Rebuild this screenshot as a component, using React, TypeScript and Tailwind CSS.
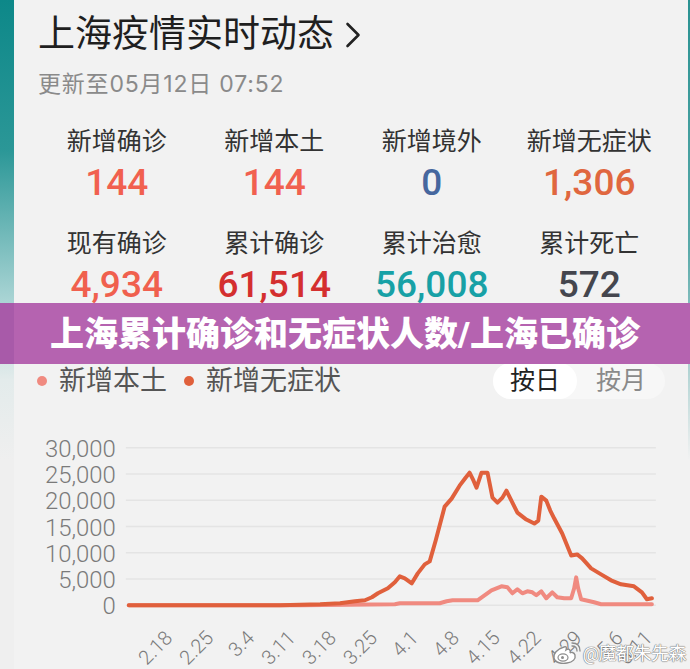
import React from "react";

const stats1 = [
  { label: "新增确诊", value: "144", color: "text-[#f1604f]" },
  { label: "新增本土", value: "144", color: "text-[#f1604f]" },
  { label: "新增境外", value: "0", color: "text-[#46679e]" },
  { label: "新增无症状", value: "1,306", color: "text-[#e0673f]" },
];
const stats2 = [
  { label: "现有确诊", value: "4,934", color: "text-[#f0604e]" },
  { label: "累计确诊", value: "61,514", color: "text-[#d42f2f]" },
  { label: "累计治愈", value: "56,008", color: "text-[#18a1a6]" },
  { label: "累计死亡", value: "572", color: "text-[#45464e]" },
];

const orange: [number, number][] = [
  [128, 605], [200, 605], [280, 605], [320, 604], [340, 603], [355, 601], [365, 600], [372, 597], [378, 593],
  [388, 588], [395, 582], [400, 576], [405, 578], [412, 583], [418, 573], [425, 564], [430, 561], [436, 540],
  [445, 506], [452, 498], [460, 485], [466, 477], [470, 472], [474, 480], [477, 487], [480, 478], [482, 472],
  [488, 472], [490, 482], [493, 497], [498, 502], [503, 497], [507, 490], [512, 500], [518, 512], [527, 519],
  [535, 523], [539, 520], [542, 496], [547, 500], [551, 510], [555, 518], [563, 533], [572, 555], [578, 554],
  [583, 558], [592, 568], [602, 574], [612, 580], [622, 584], [635, 586], [643, 592], [648, 599], [653, 598],
];
const coral: [number, number][] = [
  [128, 605], [300, 605], [395, 604], [400, 603], [440, 603], [447, 601], [453, 600], [478, 600], [485, 595],
  [492, 590], [502, 586], [508, 587], [513, 593], [518, 589], [523, 593], [528, 591], [533, 592], [537, 595],
  [542, 591], [547, 598], [553, 592], [558, 597], [565, 598], [572, 598], [575, 588], [577, 577], [579, 588],
  [582, 599], [595, 602], [602, 604], [653, 604],
];

const toPath = (pts: [number, number][]) => pts.map((p, i) => `${i ? "L" : "M"}${p[0]} ${p[1]}`).join(" ");

const yTicks = ["0", "5,000", "10,000", "15,000", "20,000", "25,000", "30,000"];
const xTicks = ["2.18", "2.25", "3.4", "3.11", "3.18", "3.25", "4.1", "4.8", "4.15", "4.22", "4.29", "5.6", "5.11"];
const xDays = [0, 7, 14, 21, 28, 35, 42, 49, 56, 63, 70, 77, 82];

function StatRow({ items }: { items: typeof stats1 }) {
  return (
    <div className="grid grid-cols-4 w-[630px]">
      {items.map((s) => (
        <div key={s.label} className="flex flex-col items-center">
          <div className="h-[28px] leading-[28px] text-[25px] text-[#333]">{s.label}</div>
          <div className={`mt-[7px] h-[40px] leading-[40px] text-[37px] font-medium ${s.color}`}>{s.value}</div>
        </div>
      ))}
    </div>
  );
}

function Chart() {
  return (
    <svg width={674} height={271} viewBox="14 398 674 271" className="block">
      {yTicks.map((t, i) => {
        const y = 605 - i * 26.33;
        return (
          <g key={t}>
            <line x1={125} x2={657} y1={y} y2={y} stroke="#e4e4e4" strokeWidth={1.5} />
            <text x={115} y={y + 1} textAnchor="end" dominantBaseline="central" fontSize={24} fontWeight={300} fill="#7a7a7a">
              {t}
            </text>
          </g>
        );
      })}
      <path d={toPath(coral)} fill="none" stroke="#f08a80" strokeWidth={4} strokeLinejoin="round" strokeLinecap="round" />
      <path d={toPath(orange)} fill="none" stroke="#e0603c" strokeWidth={4} strokeLinejoin="round" strokeLinecap="round" />
      {xTicks.map((t, i) => {
        const x = 173 + 5.87 * xDays[i];
        const y = 639;
        return (
          <text key={t} x={x} y={y} textAnchor="end" transform={`rotate(-45 ${x} ${y})`} fontSize={20} fontWeight={300} fill="#7a7a7a">
            {t}
          </text>
        );
      })}
    </svg>
  );
}

export default function App() {
  return (
    <div className="relative w-[690px] h-[669px] overflow-hidden bg-[#f2f2f2] flex font-[Roboto,'Noto_Sans_CJK_SC',sans-serif]">
      <div className="w-[14px] h-full shrink-0 bg-[linear-gradient(to_bottom,#0d8889_0px,#2b9797_150px,#a9d4d4_300px,#e3ebeb_380px,#efefef_460px)]" />
      <div className="flex-1 flex flex-col">
        <div className="pl-[24px] h-[70px] flex items-center">
          <span className="text-[37px] leading-[70px] text-[#1f1f1f]">上海疫情实时动态</span>
          <svg width="16" height="26" viewBox="0 0 16 26" className="ml-[11px]">
            <path d="M2.5 2 L13.5 13 L2.5 24" fill="none" stroke="#222" strokeWidth="2.6" strokeLinecap="round" strokeLinejoin="round" />
          </svg>
        </div>
        <div className="pl-[24px] h-[28px] leading-[28px] text-[23px] tracking-[0.8px] text-[#8a8a8a] font-[Inter,'Noto_Sans_CJK_SC',sans-serif]">更新至05月12日 07:52</div>
        <div className="pl-[24px] mt-[30px]">
          <StatRow items={stats1} />
        </div>
        <div className="pl-[24px] mt-[27px]">
          <StatRow items={stats2} />
        </div>
        <div className="mt-[58px] h-[36px] flex items-center justify-between pl-[23px] pr-[23px]">
          <div className="flex items-center">
            <span className="w-[10px] h-[10px] rounded-full bg-[#f08a80]" />
            <span className="ml-[12px] text-[27px] leading-[36px] text-[#555]">新增本土</span>
            <span className="ml-[17px] w-[10px] h-[10px] rounded-full bg-[#e0603c]" />
            <span className="ml-[12px] text-[27px] leading-[36px] text-[#555]">新增无症状</span>
          </div>
          <div className="flex items-center h-[36px] rounded-full bg-[#f7f7f7]">
            <div className="w-[84px] h-[36px] rounded-full bg-white flex items-center justify-center text-[25px] text-[#222]">按日</div>
            <div className="w-[88px] h-[36px] flex items-center justify-center text-[25px] text-[#8a8a8a]">按月</div>
          </div>
        </div>
        <Chart />
      </div>
      <div className="w-[2px] h-full shrink-0 bg-[linear-gradient(to_bottom,#2a9292_0px,#5aaaaa_250px,#f2f2f2_460px)]" />

      <div className="absolute left-0 top-[303px] w-[690px] h-[61px] bg-[#b563b0] flex items-center justify-center">
        <div className="absolute left-0 top-0 w-[14px] h-full bg-[#a85aa9]" />
        <span className="relative text-white text-[34px] font-black leading-none">上海累计确诊和无症状人数/上海已确诊</span>
      </div>

      <div className="absolute right-[4px] top-[642px] flex items-center">
        <svg width="30" height="24" viewBox="0 0 30 24">
          <path d="M12 5 C5 7 1 12 2 16 C3 21 10 22 15 21 C21 20 24 17 23 13 C22 10 19 10 18 11 C19 8 17 6 14 8 C15 5 14 4 12 5 Z" fill="#fff" stroke="#8c8c8c" strokeWidth="1.4" />
          <ellipse cx="11" cy="15.5" rx="5" ry="3.6" fill="none" stroke="#8c8c8c" strokeWidth="1.2" />
          <circle cx="10.5" cy="15.5" r="1.5" fill="#8c8c8c" />
          <path d="M20 4 C23 4 25 6 25 9" fill="none" stroke="#8c8c8c" strokeWidth="1.3" strokeLinecap="round" />
          <path d="M20 1 C25 1 28 4 28 9" fill="none" stroke="#8c8c8c" strokeWidth="1.3" strokeLinecap="round" />
        </svg>
        <span className="ml-[1px] text-[18px] leading-[24px] text-white tracking-[-0.5px] [text-shadow:0_0_1px_#777,0_0_1px_#777,0_0_1px_#777]">@魔都朱先森</span>
      </div>
    </div>
  );
}
